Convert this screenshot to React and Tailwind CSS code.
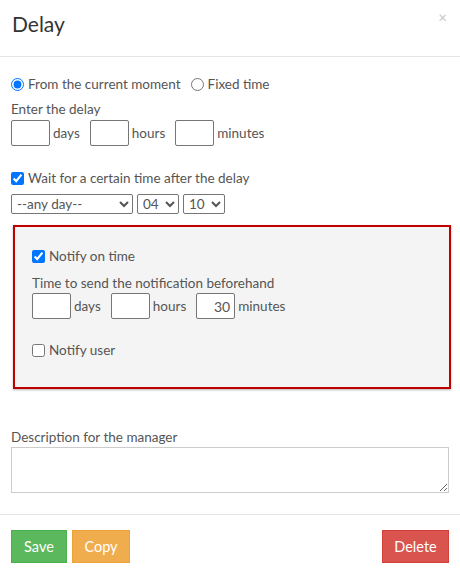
const NumBox = ({ value = '' }) => (
  <input
    type="text"
    defaultValue={value}
    className="w-[39px] h-[26px] border border-[#767676] rounded-[2px] bg-white text-right px-[4px] text-[14px] text-[#555]"
  />
);

const DelayRow = ({ minutes = '' }) => (
  <div className="flex items-center h-[26px]">
    <NumBox />
    <span className="ml-[3px] mr-[10px]">days</span>
    <NumBox />
    <span className="ml-[3px] mr-[10px]">hours</span>
    <NumBox value={minutes} />
    <span className="ml-[3px]">minutes</span>
  </div>
);

const Select = ({ width, children }) => (
  <select className="h-[20px] border border-[#767676] rounded-[2px] bg-white text-[13.5px] text-[#555] pl-[1px]" style={{ width }}>
    {children}
  </select>
);

export default function App() {
  return (
    <div className="w-[460px] h-[572px] bg-white text-[13.5px] text-[#555] font-['Lato','Open_Sans',sans-serif]">
      <div className="h-[57px] border-b border-[#e5e5e5] flex items-start justify-between px-[12px]">
        <h1 className="text-[21px] text-[#333] leading-none mt-[13px]">Delay</h1>
        <span className="text-[#c8c8c8] text-[15px] leading-none mt-[10px] mr-[1px]">×</span>
      </div>

      <div className="px-[11px] pt-[17px]">
        <div className="flex items-center h-[20px]">
          <input type="radio" name="mode" defaultChecked className="w-[13px] h-[13px] m-0 accent-[#0075ff]" />
          <label className="ml-[4px] mr-[10px]">From the current moment</label>
          <input type="radio" name="mode" className="w-[13px] h-[13px] m-0" />
          <label className="ml-[4px]">Fixed time</label>
        </div>
        <div className="mt-[5px] h-[21px] leading-[20px]">Enter the delay</div>
        <DelayRow />

        <div className="flex items-center h-[20px] mt-[22px]">
          <input type="checkbox" defaultChecked className="w-[13px] h-[13px] m-0 accent-[#0075ff]" />
          <label className="ml-[4px]">Wait for a certain time after the delay</label>
        </div>
        <div className="flex gap-[4px] mt-[6px]">
          <Select width={122}>
            <option>--any day--</option>
          </Select>
          <Select width={42}>
            <option>04</option>
          </Select>
          <Select width={42}>
            <option>10</option>
          </Select>
        </div>

        <div className="mt-[11px] ml-[2px] w-[438px] h-[164px] border-2 border-[#c00000] bg-[#f4f4f4] shadow-[0_1px_2px_rgba(0,0,0,0.3)] pl-[17px] pt-[19px]">
          <div className="flex items-center h-[20px]">
            <input type="checkbox" defaultChecked className="w-[13px] h-[13px] m-0 accent-[#0075ff]" />
            <label className="ml-[4px]">Notify on time</label>
          </div>
          <div className="mt-[7px] h-[20px] leading-[20px]">Time to send the notification beforehand</div>
          <DelayRow minutes="30" />
          <div className="flex items-center h-[20px] mt-[21px]">
            <input type="checkbox" className="w-[13px] h-[13px] m-0" />
            <label className="ml-[4px]">Notify user</label>
          </div>
        </div>

        <div className="mt-[39px] h-[18px] leading-[18px]">Description for the manager</div>
        <textarea className="block w-[438px] h-[46px] mt-[1px] border border-[#ccc] resize-y" />
      </div>

      <div className="mt-[21px] border-t border-[#e5e5e5] px-[11px] pt-[15px] flex">
        <button className="w-[56px] h-[33px] bg-[#5cb85c] border border-[#4cae4c] text-white text-[14.5px]">Save</button>
        <button className="ml-[5px] w-[58px] h-[33px] bg-[#f0ad4e] border border-[#eea236] text-white text-[14.5px]">Copy</button>
        <button className="ml-auto w-[67px] h-[33px] bg-[#d9534f] border border-[#d43f3a] text-white text-[14.5px]">Delete</button>
      </div>
    </div>
  );
}
